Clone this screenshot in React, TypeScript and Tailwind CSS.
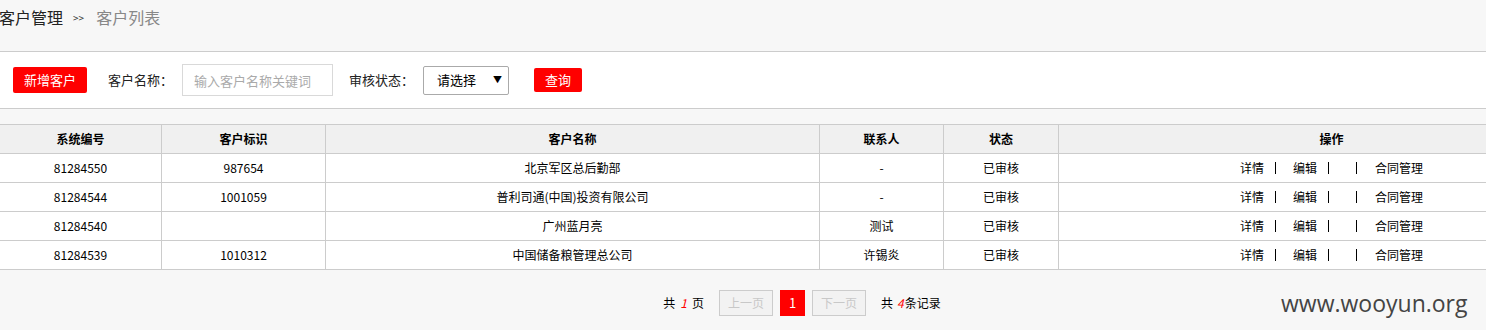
const rows = [
  { id: "81284550", tag: "987654", name: "北京军区总后勤部", contact: "-", status: "已审核" },
  { id: "81284544", tag: "1001059", name: "普利司通(中国)投资有限公司", contact: "-", status: "已审核" },
  { id: "81284540", tag: "", name: "广州蓝月亮", contact: "测试", status: "已审核" },
  { id: "81284539", tag: "1010312", name: "中国储备粮管理总公司", contact: "许锡炎", status: "已审核" },
];

const cols = ["w-[161px]", "w-[164px]", "w-[494px]", "w-[124px]", "w-[115px]", "w-[546px]"];

function Pipe({ className = "" }: { className?: string }) {
  return <span className={`inline-block w-[1px] h-[12px] bg-black ${className}`} />;
}

export default function App() {
  return (
    <div
      className="relative w-[1486px] h-[330px] overflow-hidden bg-[#f7f7f7] text-black"
      style={{ fontFamily: '"Noto Sans CJK SC", "Liberation Sans", sans-serif' }}
    >
      <div className="w-[1604px]">
        {/* Breadcrumb */}
        <div className="h-[52px] flex items-center pb-[17px] border-b border-[#cccccc] -ml-[1px]">
          <span className="text-[16px] text-[#222]">客户管理</span>
          <span className="text-[10px] ml-[10px] mr-[12px] text-[#333]">&gt;&gt;</span>
          <span className="text-[16px] text-[#888]">客户列表</span>
        </div>

        {/* Toolbar */}
        <div className="h-[57px] bg-white border-b border-[#cccccc] flex items-center pl-[13px] text-[13px]">
          <button className="h-[26px] w-[74px] bg-[#ff0000] text-white rounded-[2px] text-[13px]">新增客户</button>
          <span className="ml-[21px] text-[#222]">客户名称：</span>
          <input
            placeholder="输入客户名称关键词"
            className="ml-[9px] w-[151px] h-[32px] border border-[#d9d9d9] px-[11px] text-[13px] outline-none placeholder:text-[#aaa]"
          />
          <span className="ml-[16px] text-[#222]">审核状态：</span>
          <div className="ml-[9px] w-[86px] h-[29px] border border-[#aaaaaa] rounded-[2px] flex items-center justify-between pl-[13px] pr-[6px] text-[13px]">
            <span>请选择</span>
            <span className="text-[9px]">▼</span>
          </div>
          <button className="ml-[25px] h-[24px] w-[48px] bg-[#ff0000] text-white rounded-[2px] text-[13px]">查询</button>
        </div>

        {/* Table */}
        <div className="mt-[15px] text-[12px]">
          <div className="flex h-[30px] bg-[#f0f0f0] border-t border-b border-[#cccccc] font-bold">
            {["系统编号", "客户标识", "客户名称", "联系人", "状态", "操作"].map((h, i) => (
              <div key={h} className={`${cols[i]} flex items-center justify-center ${i > 0 ? "border-l border-[#cccccc]" : ""}`}>
                {h}
              </div>
            ))}
          </div>
          {rows.map((r) => (
            <div key={r.id} className="flex h-[29px] bg-white border-b border-[#cccccc]">
              {[r.id, r.tag, r.name, r.contact, r.status].map((v, i) => (
                <div key={i} className={`${cols[i]} flex items-center justify-center ${i > 0 ? "border-l border-[#cccccc]" : ""}`}>
                  {v}
                </div>
              ))}
              <div className={`${cols[5]} flex items-center justify-center border-l border-[#cccccc]`}>
                <span>详情</span>
                <Pipe className="ml-[11px] mr-[17px]" />
                <span>编辑</span>
                <Pipe className="ml-[11px]" />
                <Pipe className="ml-[27px] mr-[18px]" />
                <span>合同管理</span>
              </div>
            </div>
          ))}
        </div>

        {/* Pagination */}
        <div className="flex items-center justify-center mt-[20px] text-[12px] h-[26px]">
          <span>
            共<i className="text-[#ff0000] italic mx-[5px]">1</i>页
          </span>
          <span className="ml-[15px] w-[54px] h-[26px] border border-[#cccccc] bg-[#f2f2f2] text-[#c8c8c8] flex items-center justify-center">上一页</span>
          <span className="ml-[7px] w-[25px] h-[26px] bg-[#ff0000] text-white flex items-center justify-center text-[13px]">1</span>
          <span className="ml-[7px] w-[54px] h-[26px] border border-[#cccccc] bg-[#f2f2f2] text-[#c8c8c8] flex items-center justify-center">下一页</span>
          <span className="ml-[15px]">
            共<i className="text-[#ff0000] italic ml-[4px] mr-[1px]">4</i>条记录
          </span>
        </div>
      </div>

      <div
        className="absolute left-[1281px] top-[286px] text-[23px] text-[#444]"
        style={{ fontFamily: '"Open Sans", "Noto Sans", sans-serif' }}
      >
        www.wooyun.org
      </div>
    </div>
  );
}
